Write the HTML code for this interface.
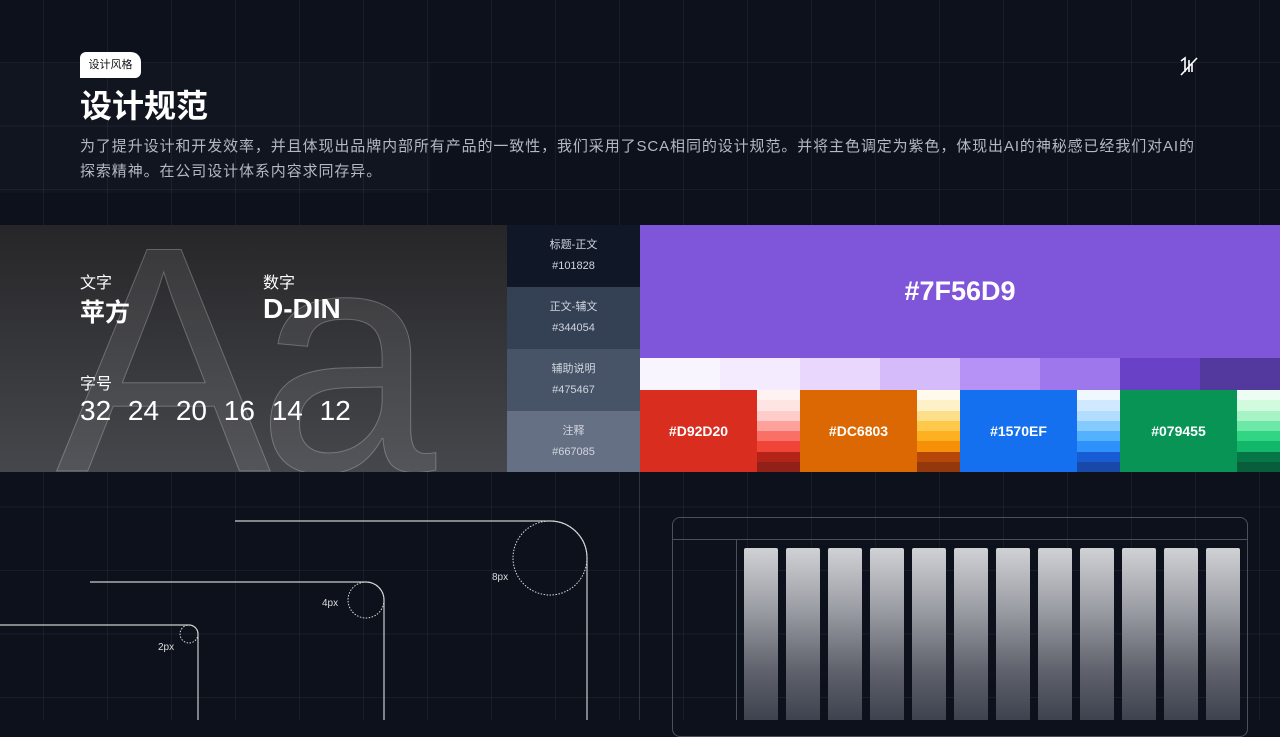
<!DOCTYPE html>
<html><head><meta charset="utf-8"><style>
*{margin:0;padding:0;box-sizing:border-box}
body{width:1280px;height:720px;overflow:hidden;background:#0d111c;font-family:"Liberation Sans","Noto Sans CJK SC",sans-serif;position:relative;color:#fff}
.a{position:absolute}
.grid{position:absolute;inset:0;background-image:linear-gradient(90deg,rgba(255,255,255,.05) 1px,transparent 1px),linear-gradient(0deg,rgba(255,255,255,.05) 1px,transparent 1px);background-size:64px 63.5px;background-position:43px 63px}
.sw{position:absolute;left:507px;width:133px;height:62px;text-align:center;font-size:11px;color:#d0d5de;line-height:21px;padding-top:10px}
.strip{position:absolute;width:43px;top:390px;height:82px;display:flex;flex-direction:column}
.strip div{flex:1}
.main{position:absolute;top:390px;height:82px;width:117px;font-size:14px;display:flex;align-items:center;justify-content:center;font-weight:bold}
.bar{position:absolute;top:548px;width:34px;height:172px;border-radius:2px 2px 0 0;background:linear-gradient(#d0d1d5,#9c9ea5 35%,#61646e 70%,#3e424e)}
</style></head><body>
<div class="grid"></div>
<div class="a" style="left:0;top:63px;width:430px;height:130px;background:rgba(255,255,255,.02)"></div>
<div class="a" style="left:80px;top:52px;width:61px;height:26px;background:#fff;border-radius:6px 10px 6px 0;color:#111;font-size:11px;line-height:26px;text-align:center">设计风格</div>
<div class="a" style="left:80px;top:85px;font-size:32px;font-weight:bold;line-height:42px">设计规范</div>
<div class="a" style="left:80px;top:134px;width:1125px;font-size:15px;line-height:25px;color:#b4b8c0;letter-spacing:0.9px">为了提升设计和开发效率，并且体现出品牌内部所有产品的一致性，我们采用了SCA相同的设计规范。并将主色调定为紫色，体现出AI的神秘感已经我们对AI的探索精神。在公司设计体系内容求同存异。</div>
<svg class="a" style="left:1178px;top:55px" width="24" height="22" viewBox="0 0 24 22"><path d="M3 6 L7 3 L7 17 M11 5 L11 17 M3 20 L19 3 M14 9 L14 17" stroke="#fff" stroke-width="1.6" fill="none"/></svg>

<div class="a" style="left:0;top:225px;width:507px;height:247px;background:linear-gradient(#262628,#46474c);overflow:hidden">
<div class="a" style="left:56px;top:-25px;font-size:322px;font-family:'Liberation Sans',sans-serif;color:rgba(255,255,255,.08);-webkit-text-stroke:1px rgba(255,255,255,.25);line-height:322px;letter-spacing:-14px">Aa</div>
<div class="a" style="left:80px;top:44px;font-size:16px">文字</div>
<div class="a" style="left:80px;top:68px;font-size:25px;font-weight:bold">苹方</div>
<div class="a" style="left:263px;top:44px;font-size:16px">数字</div>
<div class="a" style="left:263px;top:68px;font-size:28px;font-weight:bold">D-DIN</div>
<div class="a" style="left:80px;top:145px;font-size:16px">字号</div>
<div class="a" style="left:80px;top:170px;font-size:28px;word-spacing:9px">32 24 20 16 14 12</div>
</div>
<div class="sw" style="top:225px;background:#101828">标题-正文<br>#101828</div>
<div class="sw" style="top:287px;background:#344054">正文-辅文<br>#344054</div>
<div class="sw" style="top:349px;background:#475467">辅助说明<br>#475467</div>
<div class="sw" style="top:411px;height:61px;background:#667085">注释<br>#667085</div>

<div class="a" style="left:640px;top:225px;width:640px;height:133px;background:#7f56d9;font-size:27px;font-weight:bold;display:flex;align-items:center;justify-content:center">#7F56D9</div>
<div class="a" style="left:640px;top:358px;width:640px;height:32px;display:flex">
<div style="flex:1;background:#f9f5ff"></div><div style="flex:1;background:#f4ebff"></div><div style="flex:1;background:#e9d7fe"></div><div style="flex:1;background:#d6bbfb"></div><div style="flex:1;background:#b692f6"></div><div style="flex:1;background:#9e77ed"></div><div style="flex:1;background:#6941c6"></div><div style="flex:1;background:#53389e"></div></div>

<div class="main" style="left:640px;background:#d92d20">#D92D20</div>
<div class="strip" style="left:757px"><div style="background:#fef3f2"></div><div style="background:#fee4e2"></div><div style="background:#fecdca"></div><div style="background:#fda29b"></div><div style="background:#f97066"></div><div style="background:#f04438"></div><div style="background:#b42318"></div><div style="background:#912018"></div></div>
<div class="main" style="left:800px;background:#dc6803">#DC6803</div>
<div class="strip" style="left:917px"><div style="background:#fffaeb"></div><div style="background:#fef0c7"></div><div style="background:#fedf89"></div><div style="background:#fec84b"></div><div style="background:#fdb022"></div><div style="background:#f79009"></div><div style="background:#b54708"></div><div style="background:#93370d"></div></div>
<div class="main" style="left:960px;background:#1570ef">#1570EF</div>
<div class="strip" style="left:1077px"><div style="background:#eff8ff"></div><div style="background:#d1e9ff"></div><div style="background:#b2ddff"></div><div style="background:#84caff"></div><div style="background:#53b1fd"></div><div style="background:#2e90fa"></div><div style="background:#175cd3"></div><div style="background:#1849a9"></div></div>
<div class="main" style="left:1120px;background:#079455">#079455</div>
<div class="strip" style="left:1237px"><div style="background:#ecfdf3"></div><div style="background:#d1fadf"></div><div style="background:#a6f4c5"></div><div style="background:#6ce9a6"></div><div style="background:#32d583"></div><div style="background:#12b76a"></div><div style="background:#067647"></div><div style="background:#085d3a"></div></div>

<div class="a" style="left:639px;top:472px;width:1px;height:248px;background:rgba(255,255,255,.15)"></div>

<svg class="a" style="left:0;top:472px" width="640" height="248">
<path d="M0 153 H189 A9 9 0 0 1 198 162 V248" stroke="#ccc" fill="none" stroke-width="1.2"/>
<path d="M90 110 H366 A18 18 0 0 1 384 128 V248" stroke="#ccc" fill="none" stroke-width="1.2"/>
<path d="M235 49 H550 A37 37 0 0 1 587 86 V248" stroke="#ccc" fill="none" stroke-width="1.2"/>
<circle cx="189" cy="162" r="9" stroke="#ddd" fill="none" stroke-dasharray="1.5 1.5"/>
<circle cx="366" cy="128" r="18" stroke="#ddd" fill="none" stroke-dasharray="1.5 1.5"/>
<circle cx="550" cy="86" r="37" stroke="#ddd" fill="none" stroke-dasharray="1.5 1.5"/>
<text x="158" y="178" fill="#ddd" font-size="10" font-family="Liberation Sans">2px</text>
<text x="322" y="134" fill="#ddd" font-size="10" font-family="Liberation Sans">4px</text>
<text x="492" y="108" fill="#ddd" font-size="10" font-family="Liberation Sans">8px</text>
</svg>

<div class="a" style="left:672px;top:517px;width:576px;height:220px;border:1px solid #4a505c;border-radius:8px"></div>
<div class="a" style="left:672px;top:539px;width:576px;height:1px;background:#4a505c"></div>
<div class="a" style="left:736px;top:539px;width:1px;height:181px;background:#4a505c"></div>
<div class="bar" style="left:744px"></div><div class="bar" style="left:786px"></div><div class="bar" style="left:828px"></div><div class="bar" style="left:870px"></div><div class="bar" style="left:912px"></div><div class="bar" style="left:954px"></div><div class="bar" style="left:996px"></div><div class="bar" style="left:1038px"></div><div class="bar" style="left:1080px"></div><div class="bar" style="left:1122px"></div><div class="bar" style="left:1164px"></div><div class="bar" style="left:1206px"></div>
</body></html>
